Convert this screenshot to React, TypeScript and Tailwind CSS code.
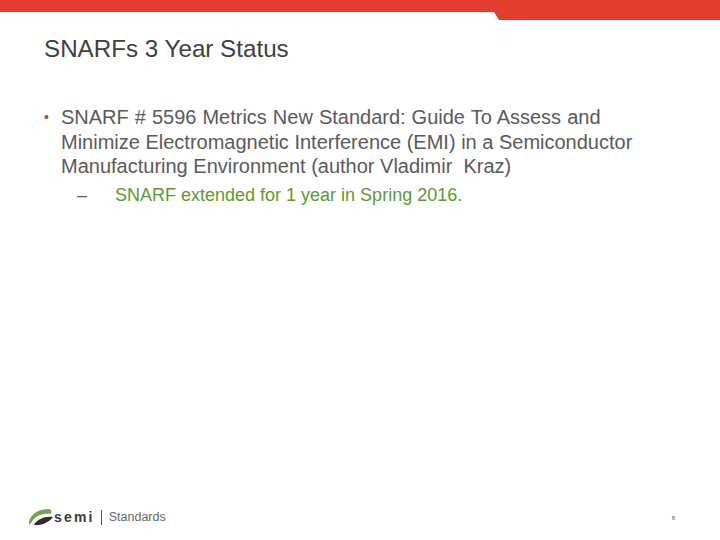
export default function App() {
  return (
    <div className="w-[720px] h-[540px] bg-white flex flex-col font-['Liberation_Sans',Arial,sans-serif] overflow-hidden">
      {/* top band, with the step down drawn as a shape */}
      <svg width="720" height="20" viewBox="0 0 720 20" className="block shrink-0">
        <path d="M0 0H720V20H499L494 12H0Z" fill="#e33e30" />
      </svg>

      <div className="pl-[44px] pt-[16px] text-[24.2px] leading-[25px] text-[#404040]">SNARFs 3 Year Status</div>

      <div className="mt-[44px] ml-[44px] w-[640px] flex text-[#5a5a5a] text-[20px] leading-[24.5px]">
        <span className="w-[17px] shrink-0 text-[14px] text-[#b5453c]">•</span>
        <div>
          <span className="[word-spacing:0.45px]">SNARF # 5596 Metrics New Standard: Guide To Assess and</span><br />
          Minimize Electromagnetic Interference (EMI) in a Semiconductor<br />
          Manufacturing Environment (author Vladimir&nbsp; Kraz)
        </div>
      </div>

      <div className="mt-[4px] ml-[77px] flex text-[18px] leading-[24px]">
        <span className="w-[38px] shrink-0 text-[#5a5a5a]">–</span>
        <span className="text-[#5b9a2f]">SNARF extended for 1 year in Spring 2016.</span>
      </div>

      <div className="mt-auto h-[37px] pl-[28px] pr-[45px] flex items-start justify-between">
        <div className="flex items-center pt-[5px]">
          <svg width="25" height="18" viewBox="0 0 25 18" className="block">
            <path d="M1 17C0 10 7 1 20 1C23 1 24 3 23 6C16 5 9 7 5 12C4 14 2 16 1 17Z" fill="#6fa64f" />
            <path d="M6 17C9 11 17 8 25 9C21 14 14 18 6 17Z" fill="#2f2f2f" />
          </svg>
          <span className="ml-[1px] text-[14px] font-bold leading-none tracking-[2.2px] text-[#3a3a3a]">semi</span>
          <span className="ml-[6px] h-[15px] w-px bg-[#555555]" />
          <span className="ml-[7px] text-[12.5px] leading-none text-[#666666]">Standards</span>
        </div>
        <span className="mt-[12px] text-[6px] leading-none text-[#666666]">8</span>
      </div>
    </div>
  )
}
